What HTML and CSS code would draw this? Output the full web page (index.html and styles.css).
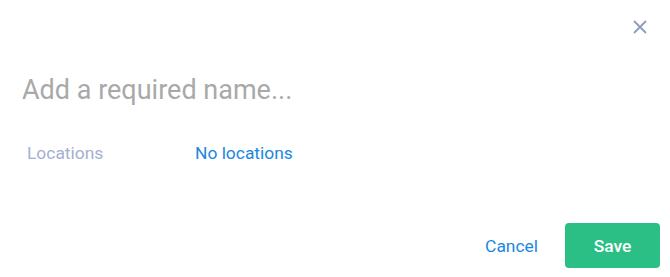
FILE: index.html
```html
<!DOCTYPE html>
<html lang="en">
<head>
    <meta charset="UTF-8">
    <title>New item</title>
    <link rel="stylesheet" href="styles.css">
</head>
<body>
    <div class="dialog">
        <div class="dialog-top">
            <button class="close-btn" type="button" aria-label="Close">
                <svg width="14" height="14" viewBox="0 0 14 14">
                    <path d="M1.5 1.5L12.5 12.5M12.5 1.5L1.5 12.5" stroke="#8d9cb6" stroke-width="1.8" stroke-linecap="round"/>
                </svg>
            </button>
        </div>
        <input class="name-input" type="text" placeholder="Add a required name...">
        <div class="field-row">
            <span class="field-label">Locations</span>
            <a class="field-value" href="#">No locations</a>
        </div>
        <div class="dialog-actions">
            <button class="btn-link" type="button">Cancel</button>
            <button class="btn-save" type="button">Save</button>
        </div>
    </div>
</body>
</html>
```

FILE: styles.css
```css
body {
    margin: 0;
    background: #fff;
    font-family: Roboto, 'Liberation Sans', Arial, sans-serif;
}

.dialog {
    width: 670px;
    height: 277px;
    box-sizing: border-box;
    padding: 0 10px 9px 22px;
    display: flex;
    flex-direction: column;
}

.dialog-top {
    display: flex;
    justify-content: flex-end;
    padding-top: 20px;
}

.close-btn {
    background: none;
    border: none;
    padding: 0;
    margin-right: 13px;
    width: 14px;
    height: 14px;
    cursor: pointer;
    display: flex;
}

.name-input {
    border: none;
    outline: none;
    padding: 0;
    margin-top: 40px;
    font-family: inherit;
    font-size: 27px;
    color: #333;
    width: 100%;
}

.name-input::placeholder {
    color: #a9a9a9;
}

.field-row {
    display: flex;
    align-items: center;
    margin-top: 37px;
    font-size: 17.4px;
}

.field-label {
    width: 168px;
    padding-left: 5px;
    color: #a4b0cf;
}

.field-value {
    color: #1b87e0;
    text-decoration: none;
}

.dialog-actions {
    margin-top: auto;
    display: flex;
    justify-content: flex-end;
    align-items: center;
    gap: 27px;
}

.btn-link {
    background: none;
    border: none;
    padding: 0;
    font-family: inherit;
    font-size: 17.4px;
    color: #1b87e0;
    cursor: pointer;
}

.btn-save {
    background: #2bbf85;
    color: #fff;
    border: none;
    border-radius: 4px;
    width: 95px;
    height: 45px;
    font-family: inherit;
    font-size: 17.4px;
    font-weight: 500;
    cursor: pointer;
}
```
